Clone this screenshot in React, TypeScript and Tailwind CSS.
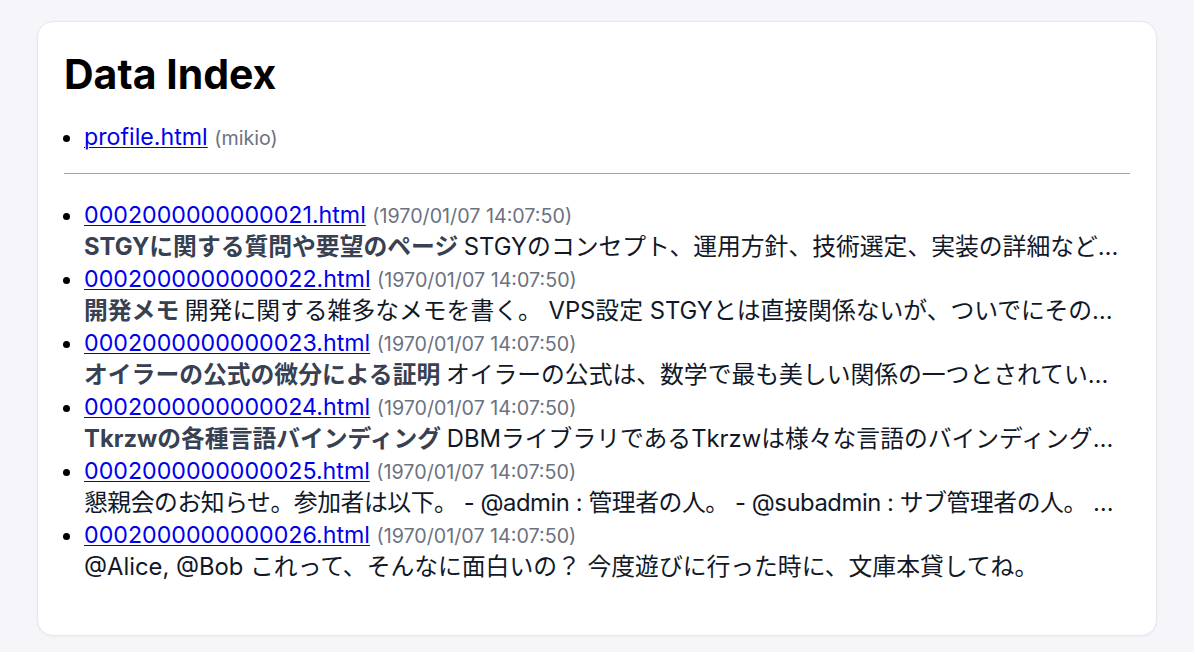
const FONT = "font-['Inter','Noto_Sans_CJK_JP',sans-serif]"

type Item = {
  file: string
  date: string
  title?: string
  body: string
  tight?: boolean
}

const ITEMS: Item[] = [
  {
    file: '0002000000000021.html',
    date: '(1970/01/07 14:07:50)',
    title: 'STGYに関する質問や要望のページ',
    body: 'STGYのコンセプト、運用方針、技術選定、実装の詳細など…',
  },
  {
    file: '0002000000000022.html',
    date: '(1970/01/07 14:07:50)',
    title: '開発メモ',
    body: '開発に関する雑多なメモを書く。 VPS設定 STGYとは直接関係ないが、ついでにその…',
  },
  {
    file: '0002000000000023.html',
    date: '(1970/01/07 14:07:50)',
    title: 'オイラーの公式の微分による証明',
    body: 'オイラーの公式は、数学で最も美しい関係の一つとされてい…',
  },
  {
    file: '0002000000000024.html',
    date: '(1970/01/07 14:07:50)',
    title: 'Tkrzwの各種言語バインディング',
    body: 'DBMライブラリであるTkrzwは様々な言語のバインディング…',
  },
  {
    file: '0002000000000025.html',
    date: '(1970/01/07 14:07:50)',
    body: '懇親会のお知らせ。参加者は以下。 - @admin : 管理者の人。 - @subadmin : サブ管理者の人。 …',
    tight: true,
  },
  {
    file: '0002000000000026.html',
    date: '(1970/01/07 14:07:50)',
    body: '@Alice, @Bob これって、そんなに面白いの？ 今度遊びに行った時に、文庫本貸してね。',
  },
]

function FileLink({ name, meta }: { name: string; meta: string }) {
  return (
    <div className="h-8 leading-8 whitespace-nowrap">
      <a href="#" className="text-[#0000ee] underline underline-offset-2 decoration-1">
        {name}
      </a>{' '}
      <span className="text-[19.7px] text-[#6b7280]">{meta}</span>
    </div>
  )
}

export default function App() {
  return (
    <div className={`min-h-[652px] bg-[#f6f6fa] pt-[21px] pb-4 ${FONT}`}>
      <div className="mx-[37px] rounded-2xl border border-[#e6e6ec] bg-white px-[26px] pt-7 pb-6 shadow-[0_1px_3px_rgba(0,0,0,0.04)]">
        <h1 className="text-[41px] leading-[48px] font-bold text-black">Data Index</h1>

        {/* profile */}
        <ul className="mt-[23px] list-disc pl-5 text-[23.2px] leading-8 text-black">
          <li>
            <FileLink name="profile.html" meta="(mikio)" />
          </li>
        </ul>

        <hr className="mt-5 border-0 border-t border-[#a3a3a3]" />

        {/* 記事一覧 */}
        <ul className="mt-[25px] mb-[28px] list-disc pl-5 text-[23.2px] leading-8 text-black">
          {ITEMS.map((it) => (
            <li key={it.file} className="h-16">
              <FileLink name={it.file} meta={it.date} />
              <div
                className={`h-8 truncate text-[23.8px] leading-8 text-[#111827] ${
                  it.tight ? 'tracking-[-0.018em]' : ''
                }`}
              >
                {it.title && <span className="font-bold text-[#374151]">{it.title} </span>}
                {it.body}
              </div>
            </li>
          ))}
        </ul>
      </div>
    </div>
  )
}
